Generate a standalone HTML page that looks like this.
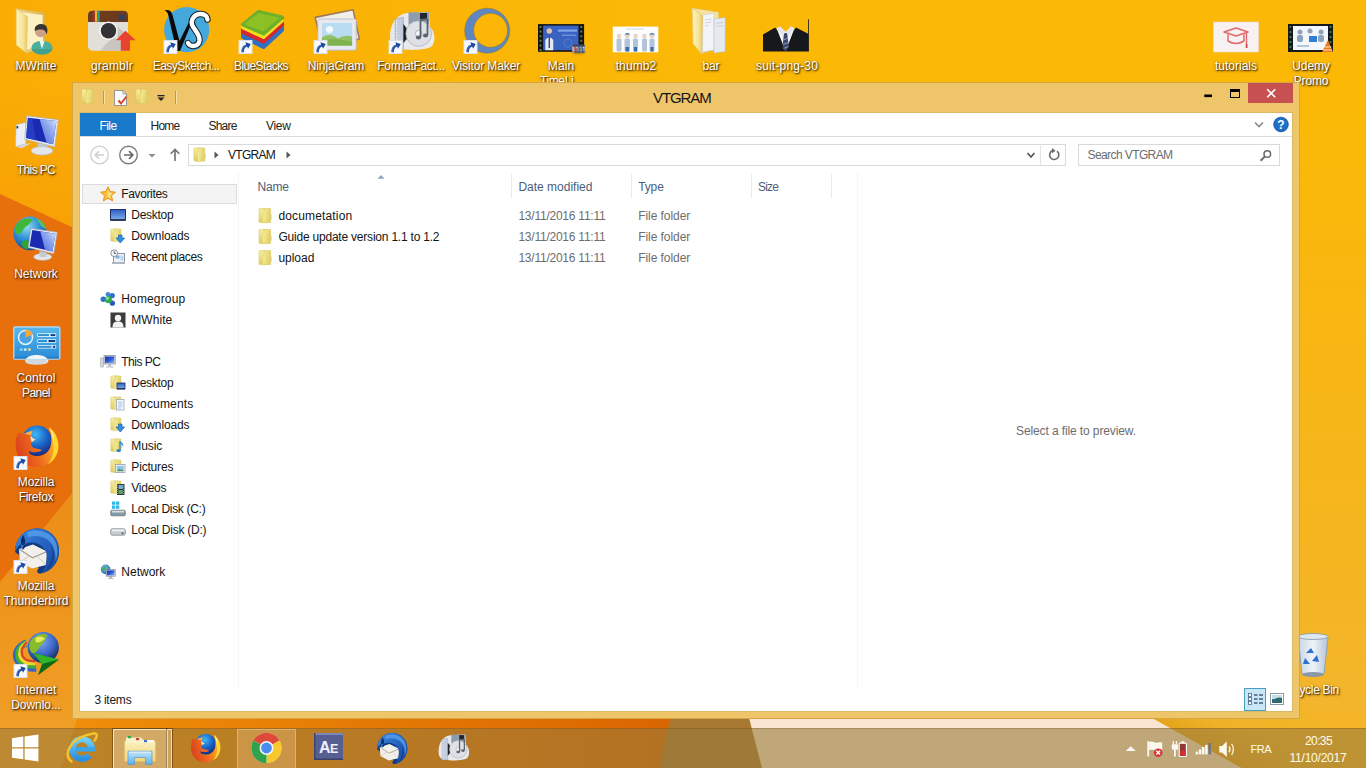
<!DOCTYPE html>
<html lang="en"><head><meta charset="utf-8"><title>VTGRAM</title>
<style>
html,body{margin:0;padding:0;width:1366px;height:768px;overflow:hidden;background:#fbb906;
 font-family:"Liberation Sans","DejaVu Sans",sans-serif;font-size:12px;color:#000}
*{box-sizing:border-box}
.abs{position:absolute}
#wall{position:absolute;left:0;top:0;width:1366px;height:768px}
/* desktop icons */
.di{position:absolute;width:90px;text-align:center;color:#fff;font-size:12px;line-height:15px;
 text-shadow:1px 1px 1.5px rgba(40,20,0,.9),0 1px 3px rgba(40,20,0,.55);white-space:nowrap}
.di svg{position:absolute;left:21px;top:0;width:48px;height:48px;overflow:visible}
.di span{position:absolute;left:0;width:90px;text-align:center}
/* window */
#win{position:absolute;left:72px;top:82px;width:1228px;height:637px;background:#efc56a;border:1px solid #d4a645}
#client{position:absolute;left:7px;top:30px;width:1212px;height:598px;background:#fff;border:0;box-shadow:0 0 0 1px #d9b965}
#title{position:absolute;left:0;top:0;width:1226px;height:30px;font-size:15px;text-align:center;line-height:29px;color:#000}
.t{position:absolute;white-space:nowrap;line-height:14px;color:#151515}
.g{color:#6d6d6d}
.h{color:#4c607a}
/* taskbar */
#tb{position:absolute;left:0;top:728px;width:1366px;height:40px}
</style></head><body>
<svg id="wall" viewBox="0 0 1366 768">
<defs>
<linearGradient id="gStrip" x1="75" x2="690" y1="0" y2="0" gradientUnits="userSpaceOnUse"><stop offset="0" stop-color="#ef8e08"/><stop offset="1" stop-color="#d96400"/></linearGradient>
<linearGradient id="gLL" x1="0" x2="0" y1="500" y2="768" gradientUnits="userSpaceOnUse"><stop offset="0" stop-color="#ec8e18"/><stop offset="1" stop-color="#f1a128"/></linearGradient>
<linearGradient id="gBase" x1="0" x2="0" y1="0" y2="768" gradientUnits="userSpaceOnUse"><stop offset="0" stop-color="#fbb906"/><stop offset=".13" stop-color="#fbb906"/><stop offset=".55" stop-color="#f7b618"/><stop offset=".93" stop-color="#f3b52c"/><stop offset="1" stop-color="#f3b52c"/></linearGradient><linearGradient id="gHz" x1="0" x2="700" y1="0" y2="0" gradientUnits="userSpaceOnUse"><stop offset="0" stop-color="#f58a00" stop-opacity=".26"/><stop offset="1" stop-color="#f59000" stop-opacity="0"/></linearGradient><linearGradient id="gTop" x1="0" x2="0" y1="84" y2="230" gradientUnits="userSpaceOnUse"><stop offset="0" stop-color="#fbb906"/><stop offset="1" stop-color="#f8a808"/></linearGradient>
<linearGradient id="gYR" x1="1190" y1="739" x2="1229" y2="669" gradientUnits="userSpaceOnUse"><stop offset="0" stop-color="#e4a41e"/><stop offset=".3" stop-color="#efb126"/><stop offset="1" stop-color="#f4b628"/></linearGradient>
</defs>
<rect width="1366" height="768" fill="url(#gBase)"/>
<polygon points="0,84 300,84 300,340 0,200" fill="url(#gTop)"/><rect width="900" height="768" fill="url(#gHz)"/>
<polygon points="0,582 230,300 700,300 700,768 0,768" fill="url(#gLL)"/>
<polygon points="0,194 230,300 0,582" fill="#e8700c"/>
<polygon points="80,710 700,710 700,768 61,768" fill="url(#gStrip)"/>
<polygon points="672,710 760,710 772,768 660,768" fill="#a67830"/>
<polygon points="747,710 1138,710 1242,768 762,768" fill="#f8e4d0"/>
<polygon points="1138,710 1366,710 1366,768 1242,768" fill="url(#gYR)"/>
</svg>
<!--DESKTOP_S--><svg width="0" height="0" style="position:absolute"><defs>
<linearGradient id="bf1" x1="0" x2="1" y1="0" y2="0"><stop offset="0" stop-color="#fdf3c0"/><stop offset=".6" stop-color="#f7e49a"/><stop offset="1" stop-color="#e8c660"/></linearGradient>
<linearGradient id="bf2" x1="0" x2="1" y1="0" y2="0"><stop offset="0" stop-color="#f1d988"/><stop offset="1" stop-color="#dcb552"/></linearGradient>
<linearGradient id="mon" x1="0" x2="1" y1="0" y2="1"><stop offset="0" stop-color="#0f1fa8"/><stop offset=".45" stop-color="#1f45d0"/><stop offset=".46" stop-color="#3a6ce0"/><stop offset="1" stop-color="#9cc6f6"/></linearGradient>
<radialGradient id="earth" cx=".4" cy=".3" r=".75"><stop offset="0" stop-color="#8fdcf4"/><stop offset=".5" stop-color="#2f8fd6"/><stop offset="1" stop-color="#12408c"/></radialGradient>
<radialGradient id="ffg" cx=".5" cy=".35" r=".7"><stop offset="0" stop-color="#ffd23a"/><stop offset=".5" stop-color="#f58a1c"/><stop offset="1" stop-color="#d83c14"/></radialGradient>
<radialGradient id="ffb" cx=".45" cy=".3" r=".7"><stop offset="0" stop-color="#3fb8f2"/><stop offset=".55" stop-color="#1a64c8"/><stop offset="1" stop-color="#1b2a84"/></radialGradient>
<radialGradient id="tbg" cx=".45" cy=".3" r=".75"><stop offset="0" stop-color="#6fb4f0"/><stop offset=".6" stop-color="#1f5fb8"/><stop offset="1" stop-color="#0c2f6c"/></radialGradient>
<linearGradient id="cpg" x1="0" x2="0" y1="0" y2="1"><stop offset="0" stop-color="#56b7ee"/><stop offset="1" stop-color="#2b8ad6"/></linearGradient>
<linearGradient id="bin" x1="0" x2="1" y1="0" y2="0"><stop offset="0" stop-color="#c8d6e4"/><stop offset=".5" stop-color="#eef3f8"/><stop offset="1" stop-color="#b4c4d6"/></linearGradient>
<linearGradient id="scrl" x1="0" x2="1" y1="1" y2="0"><stop offset="0" stop-color="#4a66d8"/><stop offset=".6" stop-color="#8fa8ee"/><stop offset="1" stop-color="#d4e0fb"/></linearGradient>
<linearGradient id="ffx" x1="0" x2="1" y1=".6" y2=".3"><stop offset="0" stop-color="#d9401c"/><stop offset=".45" stop-color="#ee6a1e"/><stop offset=".8" stop-color="#f9a024"/><stop offset="1" stop-color="#ffcb2e"/></linearGradient>
<linearGradient id="tbw" x1="0" x2="1" y1="0" y2="1"><stop offset="0" stop-color="#3f8ae0"/><stop offset=".5" stop-color="#2463c2"/><stop offset="1" stop-color="#16479a"/></linearGradient><radialGradient id="idg" cx=".42" cy=".3" r=".75"><stop offset="0" stop-color="#7fa8f0"/><stop offset=".55" stop-color="#3c68cc"/><stop offset="1" stop-color="#16224e"/></radialGradient>
<symbol id="sc" viewBox="0 0 14 14"><rect width="14" height="14" fill="#f7f9fc"/><rect x=".4" y=".4" width="13.200" height="13.200" fill="none" stroke="#d3dae3" stroke-width=".8"/><path d="M3 12.300 C2.600 8 4.600 5.300 7.600 4.700 L6.900 2.300 L12.300 3.900 L9.500 8.800 L8.700 6.600 C6.600 7.300 5 9.300 5.400 12.300Z" fill="#1c4aa2"/><path d="M3.600 11.500 C3.600 8.500 5.200 6.300 7.600 5.600" fill="none" stroke="#5f8ed8" stroke-width=".7"/></symbol>
<symbol id="bigfold" viewBox="0 0 48 48"><path d="M5 4 L20 1.5 L20 40 L5 43Z" fill="#f2d77c" stroke="#d9b44e" stroke-width=".8"/><path d="M8 6 L27 3 L27 46 L8 45Z" fill="url(#bf1)" stroke="#e0be5c" stroke-width=".8"/><path d="M27 3 L40 8 L40 42 L27 46Z" fill="url(#bf2)" stroke="#d2a944" stroke-width=".8"/></symbol>
<symbol id="monitor" viewBox="0 0 48 48"><path d="M6 1 H44 V31 H6Z" fill="#dfe4ea" stroke="#8893a0" stroke-width="1"/><rect x="8.500" y="3.500" width="33" height="25" fill="url(#mon)"/><path d="M20 31 H30 L31 37 H19Z" fill="#b5bdc6"/><ellipse cx="25" cy="39.500" rx="12" ry="4" fill="#e3e7ec" stroke="#a2abb5" stroke-width=".8"/></symbol>
<symbol id="i_firefox" viewBox="0 0 48 48"><circle cx="25" cy="17.700" r="15.200" fill="url(#ffb)"/><path d="M6 10 C3 16 3 25 5 30 C8 41 19 46 29 43.600 C40 41 47 32 46.300 21.500 C45.800 14.500 42.500 8 37 4.500 C39.500 11 40 18 38.500 23.500 C36.500 30.500 30 34.500 24 34 C20 33.500 17 31 17 28 C21 30 27 29.500 30 27 C27 25.500 23.500 26 21 24.500 C19 23 18.500 21 20 19 L23.500 16.500 C21 15.500 19.500 14.500 19 12.500 C19.500 10.500 20 9 20.500 8 C17 8.500 14 9.500 12 11 C10 10 8 9.800 6 10Z" fill="url(#ffx)"/><path d="M37 4.500 C42.500 8 45.800 14.500 46.300 21.500 C46.600 27 45 32 42 36 C40 38.500 38 40 36 41 C40 36 42 30 41.500 24 C41.500 17 40 10 37 4.500Z" fill="#ffd62e"/><path d="M37 4.500 C40 9 41.500 15 41.300 21 C43 15.500 41.500 8.500 37 4.500Z" fill="#fff4b0"/><path d="M19 12.500 C19.500 14.500 21 15.500 23.500 16.500 L20 19 C18.500 17 18.300 14.500 19 12.500Z" fill="#fbe6c8"/><path d="M12 11 C14 9.500 17 8.500 20.500 8 C20 9 19.500 10.500 19 12.500 C17 11.500 14.500 11 12 11Z" fill="#f8b04a"/></symbol><symbol id="i_tbird" viewBox="0 0 48 48"><path d="M3 25 C3 11 13 1.500 25 1.500 C38 1.500 47 11 47 24 C47 35 40 44 29 46.500 C25 47 24 44 27 41 L10 30Z" fill="#123a80"/><path d="M6.900 22 L21 17.500 L35 24.500 L34 38 L20 41.500 L8 35Z" fill="#f3f0ec"/><path d="M6.900 22 L20.500 30.800 L35 24.500" fill="none" stroke="#a29c90" stroke-width="1.100"/><path d="M8 35 L17.500 28.800 M34 38 L25 28.900" stroke="#cbc5b8" stroke-width=".9"/><path d="M3 25 C3 11 13 1.500 25 1.500 C38 1.500 47 11 47 24 C47 35 40 44 29 46.500 C33 42 35.500 36 35 29.500 C34.500 21.500 28 16 20.500 15.500 C16 15.300 13 16.500 11.500 19 L10.500 23 C9 21 8.500 19 9 17 C6 19 4 22 3 25Z" fill="url(#tbw)"/><path d="M15 5.500 C24 1.500 36 4 42 12 C46 18 46.500 27 43.500 34 C44 26 42 18 36 13 C30 8.500 22 8 16 10.500Z" fill="#5aa2ee" opacity=".75"/><path d="M38 36 C41 30 41 22 38 16 C42 21 43.500 30 40 37 C38 41 35 43.500 32 45 C35 42.500 37 39.500 38 36Z" fill="#103474" opacity=".55"/><path d="M11 8 C13 11 13.500 14 13 16.500 C11.500 18 10 19 9 17 C8.500 13.500 9.500 10.500 11 8Z" fill="#0e2c68"/><path d="M10.500 23 L11.500 19 L14 18 L12.500 21Z" fill="#0b2150"/></symbol><symbol id="i_ff2" viewBox="0 0 48 48"><path d="M3 30 C3 18 8 8 20 6 L42 5 L43 20 C48 24 49 34 45 39 C40 44 12 44 7 40 C4 38 3 34 3 30Z" fill="#e8e9ec"/><rect x="21.500" y="5.300" width="20.500" height="12.300" fill="#8f9cae"/><rect x="33" y="6" width="7" height="6" fill="#23262c"/><path d="M8.200 12 L16.400 10.400 V42 H8.200Z" fill="#c4cedc" stroke="#93a0b2" stroke-width=".6"/><path d="M9.500 13 V41" stroke="#eef2f7" stroke-width="1.200" stroke-dasharray="1.500 1.500"/><path d="M16.400 17 L24 27 L16.400 36Z" fill="#1d2026"/><circle cx="31.700" cy="26.500" r="12.800" fill="#dfe1e6" stroke="#aab0ba" stroke-width=".8"/><circle cx="31.700" cy="26.500" r="3.200" fill="#f8f8fa" stroke="#9096a0" stroke-width=".7"/><path d="M33.500 13 V30 M40.500 12 V28 M33.500 13 L40.500 12" stroke="#5a626c" stroke-width="1.800" fill="none"/><ellipse cx="31.500" cy="30.500" rx="2.600" ry="1.900" fill="#5a626c"/><ellipse cx="38.500" cy="28.500" rx="2.600" ry="1.900" fill="#5a626c"/></symbol></defs></svg>
<div class="di" style="left:-9px;top:7px"><svg viewBox="0 0 48 48"><path d="M4.200 1.700 L32.400 5.800 L33 41 L14.500 46.300Z" fill="url(#bf2)" stroke="#d9b650" stroke-width=".6"/><path d="M8 5 L30.500 8 L31 38 L14.500 43Z" fill="#fbf1c4"/><path d="M4.200 1.700 L15.500 9.900 L14.500 46.300 L4.200 38Z" fill="url(#bf1)" stroke="#e2c466" stroke-width=".6"/><ellipse cx="30" cy="41" rx="10.500" ry="6.800" fill="#3fa090"/><path d="M19.500 42 C19.500 36 24 34 30 34 C36 34 40.500 36 40.500 42" fill="#4bb09e"/><path d="M27.500 34 L30 42 L32.500 34Z" fill="#eaf4f1"/><circle cx="28.600" cy="24.600" r="5.600" fill="#cfa088"/><path d="M22.800 24 C22 17.500 28 16 32 17.500 C36 19 36 24 34.500 27.500 C34 23 30 21 22.800 24Z" fill="#3a3330"/></svg><span style="top:51.5px;letter-spacing:0.05px">MWhite</span></div>
<div class="di" style="left:67px;top:7px"><svg viewBox="0 0 48 48"><rect x="0" y="3.800" width="40" height="40" rx="4.500" fill="#e2dfd9"/><path d="M0 15 V8.300 Q0 3.800 4.500 3.800 H35.500 Q40 3.800 40 8.300 V15Z" fill="#6e3a1e"/><rect x="4.800" y="3.800" width="2.200" height="11" fill="#a8321e"/><rect x="7" y="3.800" width="2.200" height="11" fill="#e8b62e"/><rect x="9.200" y="3.800" width="2.400" height="11" fill="#2f9a8e"/><rect x="30.200" y="7.300" width="6.800" height="6.200" rx="1" fill="#3c3f52"/><path d="M26 30 L40 43.800 L12 43.800 Q18 36 26 30Z" fill="#c9c6c1"/><path d="M27 18 L40 28 V43.800 H33Z" fill="#c9c6c1"/><circle cx="20.500" cy="23.700" r="9.300" fill="#f7f6f3"/><circle cx="20.500" cy="23.700" r="7.700" fill="#333336"/><path d="M37.400 23.700 L47.600 33.200 H42 V43.800 H32.800 V33.200 H27.800Z" fill="#e8432e"/></svg><span style="top:51.5px;letter-spacing:0.19px">gramblr</span></div>
<div class="di" style="left:141px;top:7px"><svg viewBox="0 0 48 48"><circle cx="24.700" cy="22.700" r="22.600" fill="#45a8dc"/><path d="M2.500 3.500 C6 2 9.500 3.500 10.500 8 L17.500 34 L30 9 C31.500 6 34 4.500 37 5 C34 7 32.500 9 31 12.500 L18 44 H14.500 L6.500 9 C6 6 4.500 4 2.500 3.500Z" fill="#0b0b0c"/><path d="M45.500 12.500 C45.500 6.500 34.500 4 30.500 12 C26.500 20 38.500 25 37.500 33.500 C36.500 40 28.500 40.500 26 36" fill="none" stroke="#10202c" stroke-width="6.400" stroke-linecap="round"/><path d="M45.500 12.500 C45.500 6.500 34.500 4 30.500 12 C26.500 20 38.500 25 37.500 33.500 C36.500 40 28.500 40.500 26 36" fill="none" stroke="#fff" stroke-width="4.400" stroke-linecap="round"/><use href="#sc" x="1.500" y="33" width="14" height="14"/></svg><span style="top:51.5px;letter-spacing:-0.52px">EasySketch...</span></div>
<div class="di" style="left:216px;top:7px"><svg viewBox="0 0 48 48"><g stroke-linejoin="round" stroke-width="4"><path d="M6 30 L26.500 40 L45 23 V12 L6 19Z" fill="#2f6fc4" stroke="#2f6fc4"/><path d="M6 25 L26.500 34.500 L45 17.500 V12 L6 19Z" fill="#d8262c" stroke="#d8262c"/><path d="M6 20.500 L26.500 30 L45 13.500 L6 18Z" fill="#f4dc1e" stroke="#f4dc1e"/><path d="M6 17.500 L21.500 5 L45 10.500 L26.500 26.500Z" fill="#6fb02a" stroke="#6fb02a"/><path d="M8 17 L21.500 6.500 L42 11 L26 24Z" fill="#8cc024" stroke="#8cc024" stroke-width="1"/></g><use href="#sc" x="1.500" y="33" width="14" height="14"/></svg><span style="top:51.5px;letter-spacing:-0.60px">BlueStacks</span></div>
<div class="di" style="left:291px;top:7px"><svg viewBox="0 0 48 48"><path d="M3.200 10.400 L41.100 2.700 L47.300 32 L10 40Z" fill="#f2efea" stroke="#9c7c58" stroke-width="1.600" stroke-linejoin="round"/><rect x="5.800" y="12" width="38.400" height="31.200" rx="1.500" fill="#e9e9f1" stroke="#b5b4c4" stroke-width=".8"/><rect x="9.900" y="16" width="30.200" height="22.600" fill="#b9dcf0"/><circle cx="17.500" cy="22.500" r="3.600" fill="#f2f9fd"/><path d="M9.900 38.600 V30.500 C15 26.500 21 27.500 26 31.500 C31 28.500 36 28 40.100 29.500 V38.600Z" fill="#93c064"/><path d="M9.900 38.600 V34 C18 31 30 32 40.100 35 V38.600Z" fill="#7db24e"/><use href="#sc" x="1.500" y="33" width="14" height="14"/></svg><span style="top:51.5px;letter-spacing:-0.09px">NinjaGram</span></div>
<div class="di" style="left:366px;top:7px"><svg viewBox="0 0 48 48"><use href="#i_ff2" width="48" height="48"/><use href="#sc" x="1.500" y="33" width="14" height="14"/></svg><span style="top:51.5px;letter-spacing:-0.30px">FormatFact...</span></div>
<div class="di" style="left:441px;top:7px"><svg viewBox="0 0 48 48"><path fill-rule="evenodd" d="M2.700 23.700 A22.500 22.500 0 1 0 47.700 23.700 A22.500 22.500 0 1 0 2.700 23.700Z M11.600 23.300 A17 17 0 1 1 45.600 23.300 A17 17 0 1 1 11.600 23.300Z" fill="#5f86c0" stroke="#8a7a3a" stroke-width=".6"/><path d="M20 3 C24 1.500 27 3 27.500 5 C23 6 17 9.500 13.500 15 C11 11 14 5 20 3Z" fill="#5f86c0"/><use href="#sc" x="1.500" y="33" width="14" height="14"/></svg><span style="top:51.5px;letter-spacing:-0.12px">Visitor Maker</span></div>
<div class="di" style="left:516px;top:7px"><svg viewBox="0 0 48 48"><rect x="1" y="17.100" width="46.100" height="27.700" fill="#121316"/><rect x="6.100" y="18.600" width="35.400" height="24.600" fill="#3a62c0"/><path d="M3.500 19 V44 M44.300 19 V44" stroke="#6a7a3a" stroke-width="2" stroke-dasharray="2 2.600"/><circle cx="12.300" cy="24" r="2.700" fill="#e3c3a6"/><path d="M8.300 43.200 V33 Q12.300 27.500 16.300 33 V43.200Z" fill="#e4eaf2"/><rect x="11.600" y="29" width="1.400" height="12" fill="#39456e"/><rect x="21" y="22.500" width="19" height="2.200" fill="#7fa4e8"/><rect x="25" y="27.500" width="14" height="1.500" fill="#6a90d8"/><circle cx="31" cy="36" r="4" fill="none" stroke="#5680d0" stroke-width=".8"/><rect x="35.300" y="38.600" width="12.300" height="7.200" fill="#f0f2f6" stroke="#8b96a2" stroke-width=".6"/><rect x="35.300" y="37.600" width="12.300" height="2.200" fill="#3b4a5c"/><text x="41.500" y="45.200" font-family="Liberation Sans,sans-serif" font-size="6.500" font-weight="bold" fill="#c8383a" text-anchor="middle">3<tspan fill="#2f5fa8">21</tspan></text></svg><span style="top:51.5px;letter-spacing:0.07px">Main</span><span style="top:66.5px;letter-spacing:-0.40px">TimeLi...</span></div>
<div class="di" style="left:591px;top:7px"><svg viewBox="0 0 48 48"><rect x=".8" y="19.600" width="45.500" height="25.700" fill="#fcfdfe"/><rect x="14" y="21.500" width="18" height="1" fill="#c9d6e6"/><g fill="#b3c3d8"><rect x="4.500" y="31.500" width="5" height="13" rx="1.500"/><rect x="12.500" y="31.500" width="5.500" height="13" rx="1.500"/><rect x="21" y="31.500" width="5" height="13" rx="1.500"/><rect x="30" y="31.500" width="5" height="13" rx="1.500"/><rect x="37.500" y="31.500" width="5" height="13" rx="1.500"/></g><g fill="#e9d3c0"><circle cx="7" cy="29" r="2.200"/><circle cx="15.300" cy="29" r="2.200"/><circle cx="23.500" cy="29" r="2.200"/><circle cx="32.500" cy="29" r="2.200"/><circle cx="40" cy="29" r="2.200"/></g><g fill="#3c6cae"><path d="M12.500 29 A2.800 3 0 0 1 18.100 29 L17.500 27.500 H13Z"/><path d="M37.200 29 A2.800 3 0 0 1 42.800 29 L42 27.500 H38Z"/><rect x="13.500" y="40" width="3.500" height="4.500"/><rect x="22" y="40" width="3" height="4.500"/><rect x="38.500" y="40" width="3" height="4.500"/></g></svg><span style="top:51.5px;letter-spacing:0.10px">thumb2</span></div>
<div class="di" style="left:666px;top:7px"><svg viewBox="0 0 48 48"><path d="M5.200 1 L31.700 5 L32 40 L14 47Z" fill="#f5e29c" stroke="#dcb955" stroke-width=".6"/><path d="M15.600 8 L27 6 L27 43 L15.600 45Z" fill="#f3f4f7" stroke="#c6cad1" stroke-width=".6"/><path d="M18 13 L24.500 12 M18 16 L24.500 15 M18 19 L22 18.400" stroke="#c9cdd4" stroke-width=".8"/><path d="M27 12 L38.200 10.500 L38.200 44.500 L27 46Z" fill="#e6e9ee" stroke="#bcc1c9" stroke-width=".6"/><path d="M29 16.500 L36 15.500 M29 19.500 L36 18.500" stroke="#c3c8d0" stroke-width=".8"/><path d="M5.200 1 L15.600 9.100 L14.500 47 L6 36.500Z" fill="url(#bf1)" stroke="#e2c466" stroke-width=".6"/></svg><span style="top:51.5px;letter-spacing:-0.11px">bar</span></div>
<div class="di" style="left:742px;top:7px"><svg viewBox="0 0 48 48"><path d="M0 44.500 V27.600 L12.100 20.400 L22.600 33 L33 20.400 L45.100 26.800 V12.300 H45.900 V44.500Z" fill="#16181b"/><path d="M13.700 21.500 L22.600 44.500 L31.400 21.500 L28 19.500 L22.600 25 L17 19.500Z" fill="#f4f5f7"/><path d="M21 26 H24.200 L25.800 40 L22.600 44.500 L19.500 40Z" fill="#3b4668"/><path d="M20.300 33 L25 31 M20 37.500 L25.500 35.500 M20.500 41.500 L25.300 39.500" stroke="#9aa6c6" stroke-width=".9"/><path d="M13.700 21.500 L17 19.500 L22.600 25 L19.500 29Z M31.400 21.500 L28 19.500 L22.600 25 L25.800 29Z" fill="#e2e5e9"/></svg><span style="top:51.5px;letter-spacing:0.18px">suit-png-30</span></div>
<div class="di" style="left:1191px;top:7px"><svg viewBox="0 0 48 48"><rect x="1.500" y="15" width="45" height="30" fill="#f8f1f1"/><rect x="1.500" y="15" width="45" height="30" fill="none" stroke="#ecd9d9" stroke-width=".6"/><path d="M12 25 L24 21 L36 25 L24 29Z M16 27.500 V34 Q24 39 32 34 V27.500" fill="none" stroke="#e0686a" stroke-width="1.500" stroke-linejoin="round"/><path d="M34.500 26 V37" stroke="#e0686a" stroke-width="1.400"/><rect x="33.700" y="37" width="1.800" height="4" fill="#c9484c"/></svg><span style="top:51.5px;letter-spacing:-0.00px">tutorials</span></div>
<div class="di" style="left:1266px;top:7px"><svg viewBox="0 0 48 48"><rect x="1" y="17" width="45" height="28" fill="#16181c"/><rect x="6" y="19" width="35" height="24" fill="#f3f6fa"/><path d="M3.500 19 V44 M43.500 19 V44" stroke="#3a8a3e" stroke-width="1.700" stroke-dasharray="2 3"/><g fill="#8fa4bc"><circle cx="13" cy="25" r="2.500"/><circle cx="23" cy="24" r="2.500"/><circle cx="34" cy="25" r="2.500"/><rect x="10" y="28" width="6" height="7" rx="2"/><rect x="31" y="28" width="6" height="7" rx="2"/></g><rect x="22" y="29" width="8" height="6" fill="#2f7fd8"/><rect x="10" y="38" width="12" height="2" fill="#b4c6da"/><path d="M41 33 L46 45 H35Z" fill="#f07a1a"/><path d="M37.500 40 H44 M36.500 43 H45" stroke="#fbe6cf" stroke-width="1.200"/></svg><span style="top:51.5px;letter-spacing:-0.14px">Udemy</span><span style="top:66.5px;letter-spacing:-0.19px">Promo</span></div>
<div class="di" style="left:-9px;top:111px"><svg viewBox="0 0 48 48"><path d="M4.200 13.800 L13.800 11.400 L13.800 33 L3.500 35.500Z" fill="#eceff3" stroke="#b4bcc6" stroke-width=".6"/><rect x="4.600" y="15" width="1.600" height="2.400" fill="#2c2f36"/><path d="M3.500 35.500 L13 33 L19.500 32 L10 37.300Z" fill="#d3d8df"/><path d="M26 32 L35 34 V39.500 H26Z" fill="#c3c9d1"/><ellipse cx="30" cy="39.800" rx="11" ry="4.300" fill="#e2e6ea" stroke="#b4bbc3" stroke-width=".7"/><path d="M14.700 4.800 L46.300 8.700 L42.800 36 L12.700 28.200Z" fill="#e8ebf0" stroke="#a8b0bb" stroke-width=".7" stroke-linejoin="round"/><path d="M15.900 6.700 L44.400 10.100 L41.100 33.300 L14 26.900Z" fill="#1a2bb2"/><path d="M27.600 8.100 L44.400 10.100 L41.100 33.300 L34.600 31.700Z" fill="url(#scrl)"/><path d="M15.900 6.700 L20 7.200 L24 29.300 L14 26.900Z" fill="#2c44c8" opacity=".7"/></svg><span style="top:51.5px;letter-spacing:-0.62px">This PC</span></div>
<div class="di" style="left:-9px;top:215px"><svg viewBox="0 0 48 48"><circle cx="18.200" cy="18.400" r="16.800" fill="url(#earth)"/><path d="M5 9 C9 3.500 17 1.800 21 5.500 C18 7 17 10 14 11.500 C11 13 11 17 7.500 19 C5 20 2.500 17 2.800 14 C3 12 4 10.500 5 9Z" fill="#3fb83a"/><path d="M10 27 C13 24 19 25 19 29 C19 33 16 35 13 33.500 C10 32 8.500 29.500 10 27Z" fill="#2fa434"/><path d="M24 3 C29 4.500 33 9 34.500 14 C31 13.500 29 11 27.500 8.500 C26 6.500 25 5 24 3Z" fill="#5fbf5a"/><ellipse cx="30.700" cy="41.900" rx="9" ry="3.400" fill="#e4e8ec" stroke="#b6bdc5" stroke-width=".6"/><path d="M27.500 36 L34.500 37.500 V42 H27.500Z" fill="#c5cbd3"/><path d="M19 13.400 L45.200 17.300 L41.700 38.800 L16.300 32.500Z" fill="#e8ebf0" stroke="#a8b0bb" stroke-width=".7" stroke-linejoin="round"/><path d="M20.300 15.100 L43.500 18.700 L40.400 36.500 L17.600 31.200Z" fill="#1a2bb2"/><path d="M28.400 16.400 L43.500 18.700 L40.400 36.500 L33 34.800Z" fill="url(#scrl)"/></svg><span style="top:51.5px;letter-spacing:-0.07px">Network</span></div>
<div class="di" style="left:-9px;top:319px"><svg viewBox="0 0 48 48"><path d="M13 41.500 C15 33.500 34 33.500 36.500 41.500 C36 46 14 46 13 41.500Z" fill="#eef0f3"/><ellipse cx="24.800" cy="43" rx="11.500" ry="2.800" fill="#d3d8de"/><rect x="1.800" y="8" width="46" height="32" rx="1.200" fill="url(#cpg)" stroke="#a6d8f6" stroke-width="1.400"/><rect x="2.500" y="37.800" width="44.600" height="2.200" fill="#1f6fb8" opacity=".55"/><path d="M14 39.900 C17 34.600 32 34.600 35.500 39.900Z" fill="#f2f4f6"/><circle cx="13.500" cy="18.400" r="7" fill="#4aa2e2" stroke="#dff2fd" stroke-width="1.500"/><path d="M13.500 18.400 L13.500 10.600 A7.800 7.800 0 0 1 20.800 15.600Z" fill="#f2a83a"/><circle cx="9.200" cy="30.500" r="1.500" fill="#7fd0f4"/><circle cx="13.200" cy="30.500" r="1.500" fill="#bfe6fa"/><circle cx="17.400" cy="30.500" r="1.500" fill="#e8d88a"/><g fill="#e4f4fd"><rect x="25.200" y="14.300" width="19" height="3.600" rx=".8"/><rect x="25.200" y="20.200" width="19" height="3.600" rx=".8"/><rect x="25.200" y="26" width="19" height="3.600" rx=".8"/></g><g fill="#2f8fd2"><rect x="26" y="15.100" width="11" height="2"/><rect x="26" y="21" width="9" height="2"/><rect x="26" y="26.800" width="13.500" height="2"/></g><g fill="#163f78"><rect x="38.500" y="15.100" width="4.800" height="2"/><rect x="36.500" y="21" width="6.800" height="2"/><rect x="40.800" y="26.800" width="2.500" height="2"/></g></svg><span style="top:51.5px;letter-spacing:0.05px">Control</span><span style="top:66.5px;letter-spacing:-0.54px">Panel</span></div>
<div class="di" style="left:-9px;top:423px"><svg viewBox="0 0 48 48"><use href="#i_firefox" width="48" height="48"/><use href="#sc" x="1.500" y="33" width="14" height="14"/></svg><span style="top:51.5px;letter-spacing:-0.13px">Mozilla</span><span style="top:66.5px;letter-spacing:-0.30px">Firefox</span></div>
<div class="di" style="left:-9px;top:527px"><svg viewBox="0 0 48 48"><use href="#i_tbird" width="48" height="48"/><use href="#sc" x="1.500" y="33" width="14" height="14"/></svg><span style="top:51.5px;letter-spacing:-0.13px">Mozilla</span><span style="top:66.5px;letter-spacing:0.03px">Thunderbird</span></div>
<div class="di" style="left:-9px;top:631px"><svg viewBox="0 0 48 48"><path d="M14.500 12 C6 15 2.500 22.500 5.500 29 C8.500 35 16 38 24 37" fill="none" stroke="#3a62c8" stroke-width="7"/><path d="M14.500 12 C7 15 4.500 22 7 28 C9.500 33 16 35.500 24 34.500" fill="none" stroke="#3fae34" stroke-width="5.500"/><path d="M14.500 12 C8.500 15 6.500 21.500 8.500 26.500 C10.500 31 16.500 33 23.500 32.500" fill="none" stroke="#f0d430" stroke-width="3.400"/><path d="M15 11.500 C10 14.500 8.500 20.500 10.500 25 C12.500 29 17.500 30.500 23 30.300" fill="none" stroke="#d8452a" stroke-width="2.400"/><g transform="translate(0 2)"><circle cx="31.300" cy="14.500" r="15.600" fill="url(#idg)"/><path d="M18 9 C22 1.500 32 -1 36 2.500 C33 5 33.500 8.500 30 11.500 C27 14 26 18 22.500 20 C19 21.500 16 15 18 9Z" fill="#86bc2c"/><path d="M24 4.500 C28 2.500 32 3.500 33 6 C30 8 27 10 24.500 9.500 C23 8.500 23 6 24 4.500Z" fill="#e6ea62"/></g><path d="M21 22 L47.100 28.600 L26 44.200 L30 33Z" fill="#0f6a14"/><path d="M21 22 L47.100 28.600 L30 33Z" fill="#2fb42c"/><use href="#sc" x="1.500" y="33" width="14" height="14"/></svg><span style="top:51.5px;letter-spacing:-0.01px">Internet</span><span style="top:66.5px;letter-spacing:-0.06px">Downlo...</span></div>
<div class="di" style="left:1264px;top:631px"><svg viewBox="0 0 48 48"><g transform="translate(4 0)"><path d="M9 4 L39 7 L35 43 Q24 47 13 43Z" fill="url(#bin)" stroke="#8ea2b8" stroke-width="1"/><ellipse cx="24" cy="5.500" rx="15" ry="3" fill="#dfe8f0" stroke="#8196ac" stroke-width=".8"/><path d="M17 22 L22 17 L25 22 Z M28 24 L30 31 L23 30Z M16 27 L21 33 L14 33Z" fill="#2f6fd0"/><ellipse cx="24" cy="43.500" rx="11" ry="2.500" fill="#8a99a8"/></g></svg><span style="top:51.5px;letter-spacing:-0.31px">Recycle Bin</span></div><!--DESKTOP_E-->
<div id="win">
<div id="title"><span class="t" id="ttl" style="left:580px;top:6px;font-size:15px;line-height:17px;letter-spacing:-1.1px">VTGRAM</span></div>
<svg class="abs" style="left:9px;top:3px;width:100px;height:22px" viewBox="82 86 100 22">
<use href="#fold" x="79.500" y="88.500" width="16" height="16.500"/>
<path d="M103.500 91 V104 M175.500 91 V104" stroke="#b99a4c" stroke-width="1"/><path d="M104.500 91 V104 M176.500 91 V104" stroke="#f8e2a4" stroke-width="1"/>
<path d="M114.500 90.500 H123 L126.500 94 V105.500 H114.500Z" fill="#fbfbfb" stroke="#8d8d8d" stroke-width=".9"/><path d="M123 90.500 V94 H126.500" fill="none" stroke="#8d8d8d" stroke-width=".8"/><path d="M118.500 100.500 L121 103.500 L126.500 96.500" fill="none" stroke="#d8452a" stroke-width="2"/>
<use href="#fold" x="134" y="88.500" width="16" height="16.500"/>
<rect x="157.500" y="95" width="7" height="1.300" fill="#222"/><path d="M157.500 97.500 H164.500 L161 101Z" fill="#222"/>
</svg>
<div class="abs" style="left:1175px;top:0;width:45px;height:20px;background:#c75050"></div>
<svg class="abs" style="left:1123px;top:0;width:100px;height:22px" viewBox="0 0 100 22">
<rect x="8.300" y="11.500" width="7.700" height="2.600" fill="#000"/>
<rect x="34.5" y="7.5" width="9" height="7" fill="none" stroke="#000" stroke-width="1"/><rect x="34" y="6" width="10" height="3" fill="#000"/>
<path d="M71.200 6.300 L79.200 14.300 M79.200 6.300 L71.200 14.300" stroke="#fff" stroke-width="1.600" fill="none"/>
</svg>
<div id="client">
<svg width="0" height="0" style="position:absolute"><defs>
<linearGradient id="fg1" x1="0" x2="1" y1="0" y2="0"><stop offset="0" stop-color="#fbf0b4"/><stop offset=".55" stop-color="#f6e28a"/><stop offset="1" stop-color="#e9c14b"/></linearGradient>
<linearGradient id="fg2" x1="0" x2="1" y1="0" y2="0"><stop offset="0" stop-color="#f3d772"/><stop offset="1" stop-color="#d9a93a"/></linearGradient>
<linearGradient id="fgL" x1="0" x2="0" y1="0" y2="1"><stop offset="0" stop-color="#f7efa4"/><stop offset="1" stop-color="#e0cc60"/></linearGradient><linearGradient id="fgR" x1="0" x2="1" y1="0" y2=".35"><stop offset="0" stop-color="#cfb548"/><stop offset=".22" stop-color="#f3e88e"/><stop offset="1" stop-color="#e2cf66"/></linearGradient>
<symbol id="fold" viewBox="0 0 16 16"><path d="M2 .8 L6.600 .2 V14.900 L2 14.200Z" fill="url(#fgL)"/><path d="M6.600 .2 L13.600 .6 V14.400 L6.600 14.900Z" fill="url(#fgR)"/><path d="M13.600 6.500 L14.600 7 V11.500 L13.600 12Z" fill="#e6d27c"/><path d="M2 .8 L6.600 .2 L13.600 .6 V14.400 L6.600 14.900 L2 14.200Z" fill="none" stroke="#d6c25a" stroke-width=".5"/></symbol>
<symbol id="arr" viewBox="0 0 6 8"><path d="M0.5 0.5 L4.5 4 L0.5 7.5Z" fill="#555"/></symbol>
</defs></svg><div class="abs" style="left:0;top:0;width:56px;height:23px;background:#1979ca"></div>
<span class="t" style="left:19.5px;top:5.5px;letter-spacing:-0.58px;color:#fff;">File</span>
<span class="t" style="left:70.5px;top:5.5px;letter-spacing:-0.75px;color:#222;">Home</span>
<span class="t" style="left:128.5px;top:5.5px;letter-spacing:-0.80px;color:#222;">Share</span>
<span class="t" style="left:186.0px;top:5.5px;letter-spacing:-0.30px;color:#222;">View</span>
<div class="abs" style="left:0;top:23px;width:1212px;height:1px;background:#dadbdc"></div>
<svg class="abs" style="left:1170px;top:2px;width:42px;height:20px" viewBox="0 0 42 20">
<path d="M5 7.5 L9 11.5 L13 7.5" fill="none" stroke="#8a8a8a" stroke-width="1.6"/>
<circle cx="31" cy="9.5" r="7.3" fill="#1d6fc7"/><circle cx="31" cy="9.5" r="7.3" fill="none" stroke="#0f4f9c" stroke-width=".8"/>
<text x="31" y="14" font-family="Liberation Sans,sans-serif" font-size="12" font-weight="bold" fill="#fff" text-anchor="middle">?</text>
</svg>
<svg class="abs" style="left:5px;top:29px;width:100px;height:26px" viewBox="85 142 100 26">
<circle cx="99.5" cy="155" r="8.8" fill="#fff" stroke="#cfcfcf" stroke-width="1.3"/>
<path d="M104 155 H95.5 M99 151.2 L95.2 155 L99 158.8" fill="none" stroke="#cfcfcf" stroke-width="1.6"/>
<circle cx="128.5" cy="155" r="8.8" fill="#fff" stroke="#7d7d7d" stroke-width="1.4"/>
<path d="M124 155 H132.5 M129 151.2 L132.8 155 L129 158.8" fill="none" stroke="#6a6a6a" stroke-width="1.7"/>
<path d="M148.5 154 H155.5 L152 157.6Z" fill="#8c8c8c"/>
<path d="M175 161 V149.5 M170.8 153.7 L175 149.3 L179.2 153.7" fill="none" stroke="#6f6f6f" stroke-width="1.6"/>
</svg>
<div class="abs" style="left:108px;top:31px;width:878px;height:22px;border:1px solid #d9d9d9"></div>
<div class="abs" style="left:960px;top:31px;width:1px;height:22px;background:#e3e3e3"></div>
<svg class="abs" style="left:112px;top:34px;width:15px;height:16px"><use href="#fold"/></svg>
<svg class="abs" style="left:134px;top:38px;width:6px;height:8px"><use href="#arr"/></svg>
<span class="t" style="left:148.0px;top:34.5px;letter-spacing:-0.72px;">VTGRAM</span>
<svg class="abs" style="left:205.5px;top:38px;width:6px;height:8px"><use href="#arr"/></svg>
<svg class="abs" style="left:944px;top:33px;width:40px;height:18px" viewBox="1024 146 40 18">
<path d="M1027.5 153 L1031 157 L1034.5 153" fill="none" stroke="#555" stroke-width="1.7"/>
<path d="M1057 151.2 A4.6 4.6 0 1 1 1052.6 150.6" fill="none" stroke="#6a6a6a" stroke-width="1.6"/><path d="M1052 148 L1055.6 150.8 L1052 153.2Z" fill="#6a6a6a"/>
</svg>
<div class="abs" style="left:998px;top:31px;width:202px;height:22px;border:1px solid #d9d9d9"></div>
<span class="t g" style="left:1007.5px;top:34.5px;letter-spacing:-0.59px;">Search VTGRAM</span>
<svg class="abs" style="left:1178px;top:35px;width:16px;height:16px" viewBox="0 0 16 16"><circle cx="9.3" cy="6" r="3.3" fill="none" stroke="#6a6a6a" stroke-width="1.5"/><path d="M6.9 8.4 L2.6 12.7" stroke="#6a6a6a" stroke-width="2"/></svg>
<svg width="0" height="0" style="position:absolute"><defs>
<linearGradient id="scr" x1="0" x2="1" y1="0" y2="1"><stop offset="0" stop-color="#1c2fb0"/><stop offset=".5" stop-color="#2a56d8"/><stop offset="1" stop-color="#7fb2f0"/></linearGradient>
<linearGradient id="dsk" x1="0" x2="0" y1="0" y2="1"><stop offset="0" stop-color="#2f5cc0"/><stop offset="1" stop-color="#7fb2ee"/></linearGradient>
<radialGradient id="glb" cx=".4" cy=".35" r=".7"><stop offset="0" stop-color="#7fd0f0"/><stop offset="1" stop-color="#1d5fb0"/></radialGradient>
<symbol id="star" viewBox="0 0 16 16"><path d="M8 .8 L10.2 5.6 L15.4 6.2 L11.5 9.7 L12.6 14.9 L8 12.2 L3.4 14.9 L4.5 9.7 L.6 6.2 L5.8 5.6Z" fill="#f9c23a" stroke="#e8901c" stroke-width="1"/><path d="M8 3.4 L9.4 6.6 L12.6 7 L10.2 9.2 L10.9 12.4 L8 10.8Z" fill="#fde08a"/></symbol>
<symbol id="desk" viewBox="0 0 16 16"><rect x=".5" y="2.5" width="15" height="10.5" fill="url(#dsk)" stroke="#1e2f6a" stroke-width="1"/><rect x=".5" y="12" width="15" height="2" fill="#2c3a5c"/></symbol>
<symbol id="dl" viewBox="0 0 16 16"><use href="#fold" x="-1" width="14" height="15"/><path d="M8.6 7 H12 V10 H14.6 L10.3 15 L6 10 H8.6Z" fill="#2f8fe0" stroke="#1a62b0" stroke-width=".7"/></symbol>
<symbol id="recent" viewBox="0 0 16 16"><rect x="3.5" y="4.5" width="11" height="9" fill="#eef3f8" stroke="#8a97a6"/><rect x="5.5" y="6.5" width="4" height="3" fill="#7fb0e0"/><rect x="10.5" y="6.5" width="3" height="5" fill="#b9d3ee"/><rect x="2" y="13" width="13" height="2" fill="#aeb6bf"/><circle cx="4.2" cy="4.2" r="3.4" fill="#f4f6f8" stroke="#7d8894" stroke-width=".9"/><path d="M4.2 2.2 V4.4 H6" fill="none" stroke="#4a5561" stroke-width=".9"/></symbol>
<symbol id="hg" viewBox="0 0 16 16"><circle cx="3.3" cy="8.2" r="2.7" fill="#2e6fd0"/><circle cx="12.2" cy="4.6" r="2.7" fill="#2e6fd0"/><circle cx="12.4" cy="12.2" r="2.6" fill="#2a5cc0"/><circle cx="8" cy="3.2" r="2.3" fill="#3a86d8"/><circle cx="8.4" cy="8.6" r="3.6" fill="#2fae48"/><circle cx="7.4" cy="7.4" r="1.3" fill="#a8e8b0"/></symbol>
<symbol id="usr" viewBox="0 0 16 16"><rect x=".5" y=".5" width="15" height="15" fill="#3b3b3b"/><circle cx="8" cy="6" r="3.2" fill="#f2f2f2"/><path d="M2.5 15.5 C2.5 10.5 5 9.6 8 9.6 C11 9.6 13.5 10.5 13.5 15.5Z" fill="#f2f2f2"/></symbol>
<symbol id="pc" viewBox="0 0 16 16"><rect x=".8" y="4" width="2.4" height="9" fill="#d9dde2" stroke="#8d949c" stroke-width=".6"/><rect x="4" y="1.5" width="11.2" height="8.5" fill="#d7dce2" stroke="#7f8a96" stroke-width=".7"/><rect x="5" y="2.5" width="9.2" height="6.4" fill="url(#scr)"/><rect x="8.4" y="10" width="2.6" height="2.2" fill="#aab2ba"/><rect x="6" y="12.2" width="7.4" height="1.4" fill="#c4cad1"/></symbol>
<symbol id="fdesk" viewBox="0 0 16 16"><use href="#fold" x="-1" width="14" height="15"/><rect x="7" y="8" width="8" height="6" fill="url(#dsk)" stroke="#1e2f6a" stroke-width=".8"/><rect x="7" y="13" width="8" height="1.4" fill="#2c3a5c"/></symbol>
<symbol id="fdoc" viewBox="0 0 16 16"><use href="#fold" x="-1" width="14" height="15"/><rect x="6.5" y="3.5" width="7.5" height="10.5" fill="#f7f9fb" stroke="#9aa7b5" stroke-width=".8"/><path d="M8 6 H12.5 M8 8 H12.5 M8 10 H12.5 M8 12 H11" stroke="#8fb0d8" stroke-width=".8"/></symbol>
<symbol id="fmus" viewBox="0 0 16 16"><use href="#fold" x="-1" width="14" height="15"/><path d="M10 3 V12.5" stroke="#2c86c8" stroke-width="1.3"/><ellipse cx="8.6" cy="12.6" rx="2.2" ry="1.7" fill="#2c86c8"/><path d="M10 3 C12.5 4.5 14 6 13 9.5 C13 7.5 12 6.5 10 6Z" fill="#3c9be0"/></symbol>
<symbol id="fpic" viewBox="0 0 16 16"><use href="#fold" x="-1" width="14" height="15"/><rect x="5.5" y="5.5" width="9.5" height="8" fill="#f4f7fa" stroke="#93a0ae" stroke-width=".8"/><rect x="6.8" y="6.8" width="6.9" height="5.4" fill="#8cc4ea"/><path d="M6.8 12.2 L9.4 9.4 L11 11 L12.2 10 L13.7 12.2Z" fill="#4e9a58"/></symbol>
<symbol id="fvid" viewBox="0 0 16 16"><use href="#fold" x="-1" width="14" height="15"/><rect x="7" y="4" width="7.5" height="11" fill="#30343a"/><rect x="8.6" y="5" width="4.3" height="4" fill="#6fb3d8"/><rect x="8.6" y="10" width="4.3" height="4" fill="#5aa06a"/><path d="M7.7 5 V15 M13.8 5 V15" stroke="#d8dde2" stroke-width=".7" stroke-dasharray="1 1"/></symbol>
<symbol id="hdc" viewBox="0 0 16 16"><path d="M2 .5 H5.2 V3.8 H2Z M5.9 .5 H9.3 V3.8 H5.9Z M2 4.5 H5.2 V7.8 H2Z M5.9 4.5 H9.3 V7.8 H5.9Z" fill="#2bb7e8"/><rect x=".7" y="9.2" width="14.6" height="5.6" rx="1.4" fill="#8f999f" stroke="#5f6a70" stroke-width=".7"/><rect x="1.6" y="9.8" width="12.8" height="1.6" rx=".8" fill="#d6dcdf"/><rect x="2.5" y="12.6" width="7" height="1" fill="#4fa8d0"/></symbol>
<symbol id="hdd" viewBox="0 0 16 16"><rect x=".7" y="6.8" width="14.6" height="6.4" rx="1.6" fill="#c9ced2" stroke="#7f878d" stroke-width=".8"/><rect x="1.6" y="7.5" width="12.8" height="1.8" rx=".9" fill="#f0f2f4"/><rect x="11.3" y="10.3" width="2.4" height="1.8" fill="#6e777d"/></symbol>
<symbol id="net" viewBox="0 0 16 16"><circle cx="5.6" cy="5.4" r="4.8" fill="url(#glb)"/><path d="M3 3.2 C4.5 1.5 6.5 2.5 6 4.2 C5.5 5.8 3.4 5.6 3 7.6 C2 6.5 1.8 4.5 3 3.2Z" fill="#49b050"/><rect x="6.2" y="5.6" width="9" height="6.6" fill="#d7dce2" stroke="#6f7a86" stroke-width=".6"/><rect x="7" y="6.4" width="7.4" height="5" fill="url(#scr)"/><rect x="9.7" y="12.2" width="2" height="1.8" fill="#9aa3ab"/><rect x="8" y="14" width="5.4" height="1.1" fill="#b9c0c7"/></symbol>
</defs></svg>
<div class="abs" style="left:2px;top:71px;width:155px;height:20px;background:#f4f4f4;border:1px solid #dcdcdc"></div>
<div class="abs" style="left:158px;top:60px;width:1px;height:515px;background:#f5f5f5"></div>
<svg class="abs" style="left:20px;top:72.7px;width:16px;height:16px"><use href="#star"/></svg>
<span class="t" style="left:41.3px;top:73.7px;letter-spacing:-0.37px;">Favorites</span>
<svg class="abs" style="left:30px;top:93.7px;width:16px;height:16px"><use href="#desk"/></svg>
<span class="t" style="left:51.3px;top:94.7px;letter-spacing:-0.29px;">Desktop</span>
<svg class="abs" style="left:30px;top:114.7px;width:16px;height:16px"><use href="#dl"/></svg>
<span class="t" style="left:51.3px;top:115.7px;letter-spacing:-0.15px;">Downloads</span>
<svg class="abs" style="left:30px;top:135.7px;width:16px;height:16px"><use href="#recent"/></svg>
<span class="t" style="left:51.3px;top:136.7px;letter-spacing:-0.39px;">Recent places</span>
<svg class="abs" style="left:20px;top:177.7px;width:16px;height:16px"><use href="#hg"/></svg>
<span class="t" style="left:41.3px;top:178.7px;letter-spacing:0.14px;">Homegroup</span>
<svg class="abs" style="left:30px;top:198.7px;width:16px;height:16px"><use href="#usr"/></svg>
<span class="t" style="left:51.3px;top:199.7px;letter-spacing:0.05px;">MWhite</span>
<svg class="abs" style="left:20px;top:240.7px;width:16px;height:16px"><use href="#pc"/></svg>
<span class="t" style="left:41.3px;top:241.7px;letter-spacing:-0.52px;">This PC</span>
<svg class="abs" style="left:30px;top:261.7px;width:16px;height:16px"><use href="#fdesk"/></svg>
<span class="t" style="left:51.3px;top:262.7px;letter-spacing:-0.29px;">Desktop</span>
<svg class="abs" style="left:30px;top:282.7px;width:16px;height:16px"><use href="#fdoc"/></svg>
<span class="t" style="left:51.3px;top:283.7px;letter-spacing:0.15px;">Documents</span>
<svg class="abs" style="left:30px;top:303.7px;width:16px;height:16px"><use href="#dl"/></svg>
<span class="t" style="left:51.3px;top:304.7px;letter-spacing:-0.15px;">Downloads</span>
<svg class="abs" style="left:30px;top:324.7px;width:16px;height:16px"><use href="#fmus"/></svg>
<span class="t" style="left:51.3px;top:325.7px;letter-spacing:-0.07px;">Music</span>
<svg class="abs" style="left:30px;top:345.7px;width:16px;height:16px"><use href="#fpic"/></svg>
<span class="t" style="left:51.3px;top:346.7px;letter-spacing:-0.17px;">Pictures</span>
<svg class="abs" style="left:30px;top:366.7px;width:16px;height:16px"><use href="#fvid"/></svg>
<span class="t" style="left:51.3px;top:367.7px;letter-spacing:-0.25px;">Videos</span>
<svg class="abs" style="left:30px;top:387.7px;width:16px;height:16px"><use href="#hdc"/></svg>
<span class="t" style="left:51.3px;top:388.7px;letter-spacing:-0.31px;">Local Disk (C:)</span>
<svg class="abs" style="left:30px;top:408.7px;width:16px;height:16px"><use href="#hdd"/></svg>
<span class="t" style="left:51.3px;top:409.7px;letter-spacing:-0.25px;">Local Disk (D:)</span>
<svg class="abs" style="left:20px;top:450.7px;width:16px;height:16px"><use href="#net"/></svg>
<span class="t" style="left:41.3px;top:451.7px;letter-spacing:-0.00px;">Network</span>
<div class="abs" style="left:431px;top:60px;width:1px;height:25px;background:#ebebeb"></div>
<div class="abs" style="left:551px;top:60px;width:1px;height:25px;background:#ebebeb"></div>
<div class="abs" style="left:671px;top:60px;width:1px;height:25px;background:#ebebeb"></div>
<div class="abs" style="left:751px;top:60px;width:1px;height:25px;background:#ebebeb"></div>
<div class="abs" style="left:777px;top:60px;width:1px;height:515px;background:#f5f5f5"></div>
<svg class="abs" style="left:297px;top:61px;width:8px;height:6px" viewBox="0 0 8 6"><path d="M.5 4.8 L4 1 L7.5 4.8Z" fill="#8aa6c4"/></svg>
<span class="t h" style="left:177.6px;top:66.5px;letter-spacing:-0.25px;">Name</span>
<span class="t h" style="left:438.4px;top:66.5px;letter-spacing:-0.00px;">Date modified</span>
<span class="t h" style="left:558.2px;top:66.5px;letter-spacing:-0.13px;">Type</span>
<span class="t h" style="left:678.0px;top:66.5px;letter-spacing:-0.84px;">Size</span>
<svg class="abs" style="left:177px;top:94.6px;width:16px;height:16px"><use href="#fold"/></svg>
<span class="t" style="left:198.4px;top:95.6px;letter-spacing:0.16px;">documetation</span>
<span class="t g" style="left:438.4px;top:95.6px;letter-spacing:-0.23px;">13/11/2016 11:11</span>
<span class="t g" style="left:558.2px;top:95.6px;letter-spacing:-0.06px;">File folder</span>
<svg class="abs" style="left:177px;top:115.6px;width:16px;height:16px"><use href="#fold"/></svg>
<span class="t" style="left:198.4px;top:116.6px;letter-spacing:-0.21px;">Guide update version 1.1 to 1.2</span>
<span class="t g" style="left:438.4px;top:116.6px;letter-spacing:-0.23px;">13/11/2016 11:11</span>
<span class="t g" style="left:558.2px;top:116.6px;letter-spacing:-0.06px;">File folder</span>
<svg class="abs" style="left:177px;top:136.6px;width:16px;height:16px"><use href="#fold"/></svg>
<span class="t" style="left:198.4px;top:137.6px;letter-spacing:-0.01px;">upload</span>
<span class="t g" style="left:438.4px;top:137.6px;letter-spacing:-0.23px;">13/11/2016 11:11</span>
<span class="t g" style="left:558.2px;top:137.6px;letter-spacing:-0.06px;">File folder</span>
<span class="t g" style="left:936.0px;top:310.5px;letter-spacing:-0.11px;">Select a file to preview.</span>
<span class="t" style="left:14.4px;top:579.7px;letter-spacing:-0.24px;color:#1a1a24;">3 items</span>
<div class="abs" style="left:1164px;top:575px;width:22px;height:23px;background:#c8e6f6;border:1px solid #4aa0c0"></div>
<svg class="abs" style="left:1164px;top:575px;width:44px;height:23px" viewBox="1244 688 44 23">
<g fill="#fff" stroke="#4a6484" stroke-width=".8"><rect x="1248.5" y="693.5" width="3" height="3"/><rect x="1248.5" y="697.5" width="3" height="3"/><rect x="1248.5" y="701.5" width="3" height="3"/></g>
<path d="M1254 695 H1257.5 M1259 695 H1263 M1254 699 H1257.5 M1259 699 H1263 M1254 703 H1257.5 M1259 703 H1263" stroke="#44607e" stroke-width="1.3"/>
<rect x="1270.500" y="693.500" width="13" height="11" fill="#fff" stroke="#8c98a4"/><rect x="1272" y="695" width="10" height="8" fill="#2e6a70"/><path d="M1272 695 H1282 V698 C1278 696 1275 700 1272 699Z" fill="#bfe0e6"/>
</svg>
</div>
</div>
<!--TB_S--><div id="tb">
<div class="abs" style="left:0;top:0;width:1366px;height:40px;background:rgba(152,122,60,.58);border-top:1px solid rgba(90,60,10,.25)"></div>
<div class="abs" style="left:113px;top:1px;width:54px;height:39px;background:rgba(255,240,215,.36);border:1px solid rgba(255,244,222,.8);border-bottom:0;box-shadow:0 0 0 1px rgba(70,40,0,.5)"></div>
<div class="abs" style="left:167px;top:1px;width:5px;height:39px;background:rgba(255,240,215,.3);border:1px solid rgba(255,244,222,.75);border-bottom:0;box-shadow:0 0 0 1px rgba(70,40,0,.5)"></div>
<div class="abs" style="left:237px;top:1px;width:59px;height:39px;background:rgba(255,225,170,.25);border:1px solid rgba(255,235,200,.35);border-bottom:0"></div>
<svg class="abs" style="left:0;top:0;width:500px;height:40px" viewBox="0 728 500 40">
<defs><linearGradient id="exf" x1="0" x2="0" y1="0" y2="1"><stop offset="0" stop-color="#fbf0c0"/><stop offset="1" stop-color="#f2d676"/></linearGradient><linearGradient id="exs" x1="0" x2="0" y1="0" y2="1"><stop offset="0" stop-color="#c4e6f9"/><stop offset="1" stop-color="#5aaeE8"/></linearGradient><linearGradient id="ieg" x1="0" x2="0" y1="0" y2="1"><stop offset="0" stop-color="#6fd0f8"/><stop offset="1" stop-color="#2a8fe0"/></linearGradient></defs>
<!-- start -->
<path d="M12 738.200 L23.300 736.600 V747.300 H12Z M24.600 736.400 L38.400 734.500 V747.300 H24.600Z M12 748.600 H23.300 V759.300 L12 757.700Z M24.600 748.600 H38.400 V761.400 L24.600 759.500Z" fill="#fff"/>
<!-- IE -->
<g><path d="M89.470 755.270 A9.750 9.750 0 1 1 91.750 749.600" fill="none" stroke="url(#ieg)" stroke-width="6.300"/><rect x="76" y="747" width="18.900" height="4.600" fill="#3aa6e8"/>
<path d="M71.500 761.500 C62 755 70 737 94.500 733.200 C98 733.500 97 737.500 94.500 740.500" fill="none" stroke="#f2c42e" stroke-width="2.500" stroke-linecap="round"/></g>
<!-- explorer -->
<g><path d="M124.500 741 H155.500 V761.500 H124.500Z" fill="url(#exf)" stroke="#dcc070" stroke-width=".8"/><path d="M126 741 V737.500 H141 L143.500 740 H154 V743 H126Z" fill="#fbf2cc"/><rect x="127.800" y="736" width="3.400" height="2.200" fill="#2fa84a"/><rect x="136" y="738" width="3.200" height="2.200" fill="#c8482e"/><rect x="144" y="740" width="3.200" height="2.200" fill="#3f6fd0"/><rect x="147.200" y="740" width="6" height="2.200" fill="#fdfdfd"/>
<path d="M128 751.200 H152 V764.400 H145.500 V757.500 H134.500 V764.400 H128Z" fill="url(#exs)" stroke="#4f9ad8" stroke-width=".7"/><path d="M129 752.200 H151" stroke="#e4f4fd" stroke-width="1"/></g>
<!-- firefox -->
<use href="#i_firefox" x="188.500" y="732" width="33" height="33"/>
<!-- chrome -->
<g><circle cx="266.500" cy="748" r="15" fill="#fff"/><path d="M266.500 748 L253.510 740.500 A15 15 0 0 1 279.490 740.500Z" fill="#de4a3a"/><path d="M266.500 748 L279.490 740.500 A15 15 0 0 1 266.500 763Z" fill="#f7c92c"/><path d="M266.500 748 L266.500 763 A15 15 0 0 1 253.510 740.500Z" fill="#2fa24e"/>
<path d="M253.510 740.500 A15 15 0 0 1 279.490 740.500 L266.500 741Z" fill="#de4a3a"/><path d="M279.490 740.500 L272.600 751.500 L266.500 763 A15 15 0 0 0 279.490 740.500Z" fill="#f7c92c"/><path d="M253.510 740.500 L260.400 751.500 L266.500 763 A15 15 0 0 1 253.510 740.500Z" fill="#2fa24e"/>
<circle cx="266.500" cy="748" r="7" fill="#f4f6f8"/><circle cx="266.500" cy="748" r="5.400" fill="#4a8cf0"/></g>
<!-- AE -->
<g><rect x="314" y="733" width="29" height="27" fill="#565e92"/><rect x="314" y="733" width="29" height="2" fill="#7e88b8"/><rect x="314" y="733" width="1.500" height="27" fill="#3e4570"/><rect x="314" y="758.500" width="29" height="1.500" fill="#3a4068"/><text x="328.500" y="753" font-family="Liberation Sans,sans-serif" font-size="16" font-weight="bold" fill="#eef0fa" text-anchor="middle" letter-spacing="-.5">A<tspan font-size="12.500">E</tspan></text></g>
<!-- thunderbird -->
<use href="#i_tbird" x="375" y="732" width="33" height="33"/>
<!-- format factory -->
<use href="#i_ff2" x="436.500" y="731" width="33" height="33"/>
</svg>
<svg class="abs" style="left:1120px;top:0;width:120px;height:40px" viewBox="1120 728 120 40">
<path d="M1125.700 751 L1130.700 746.300 L1135.800 751Z" fill="#fbf8f0"/>
<!-- flag -->
<rect x="1147.300" y="741.200" width="1.800" height="15.200" fill="#fbf8f0"/><path d="M1149.100 742 C1152.500 740.600 1154.500 743.600 1158 742.600 C1159.500 742.200 1161 742 1162.200 742.400 V749.600 C1159 748.600 1157 750.600 1154 750 C1152 749.600 1150.500 749.600 1149.100 750Z" fill="#fbf8f0"/><circle cx="1158.200" cy="752.700" r="4.300" fill="#d6363a"/><path d="M1156.300 750.800 L1160.100 754.600 M1160.100 750.800 L1156.300 754.600" stroke="#fff" stroke-width="1.400"/>
<!-- power -->
<path d="M1173.300 741 V744.500 M1176.400 741 V744.500" stroke="#fbf8f0" stroke-width="1.300"/><rect x="1171.800" y="744.300" width="6.200" height="5.400" rx="1" fill="#fbf8f0"/><rect x="1174" y="749.500" width="1.800" height="7" fill="#fbf8f0"/><rect x="1179.200" y="743.200" width="7.200" height="13.300" rx="1" fill="#8e3a34" stroke="#fbf8f0" stroke-width="1.200"/><rect x="1181.300" y="741.300" width="3" height="1.900" fill="#fbf8f0"/><rect x="1180.300" y="750.500" width="5" height="5.200" fill="#d42e34"/>
<!-- signal -->
<g fill="#fbf8f0"><rect x="1195.600" y="751.600" width="2.500" height="2.800"/><rect x="1198.800" y="749.400" width="2.500" height="5"/><rect x="1202" y="747" width="2.500" height="7.400"/><rect x="1205.200" y="744.800" width="2.500" height="9.600"/></g><rect x="1208.400" y="743" width="2.600" height="11.400" fill="#70767f"/>
<!-- volume -->
<path d="M1219.300 746 H1222 L1226.800 741.500 V757 L1222 752.500 H1219.300Z" fill="#fbf8f0"/><path d="M1229 746.300 Q1231 749.300 1229 752.300 M1231.600 743.800 Q1235.200 749.300 1231.600 754.800" fill="none" stroke="#fbf0c8" stroke-width="1.400"/>
</svg>
<span class="t" style="left:1250.6px;top:14.2px;font-size:11px;line-height:13px;letter-spacing:-0.50px;color:#fffbe8;line-height:14px;">FRA</span>
<span class="t" style="left:1305.0px;top:6.0px;letter-spacing:-0.61px;color:#fffbe8;">20:35</span>
<span class="t" style="left:1289.5px;top:23.0px;letter-spacing:-0.22px;color:#fffbe8;">11/10/2017</span>
</div><!--TB_E-->
</body></html>
